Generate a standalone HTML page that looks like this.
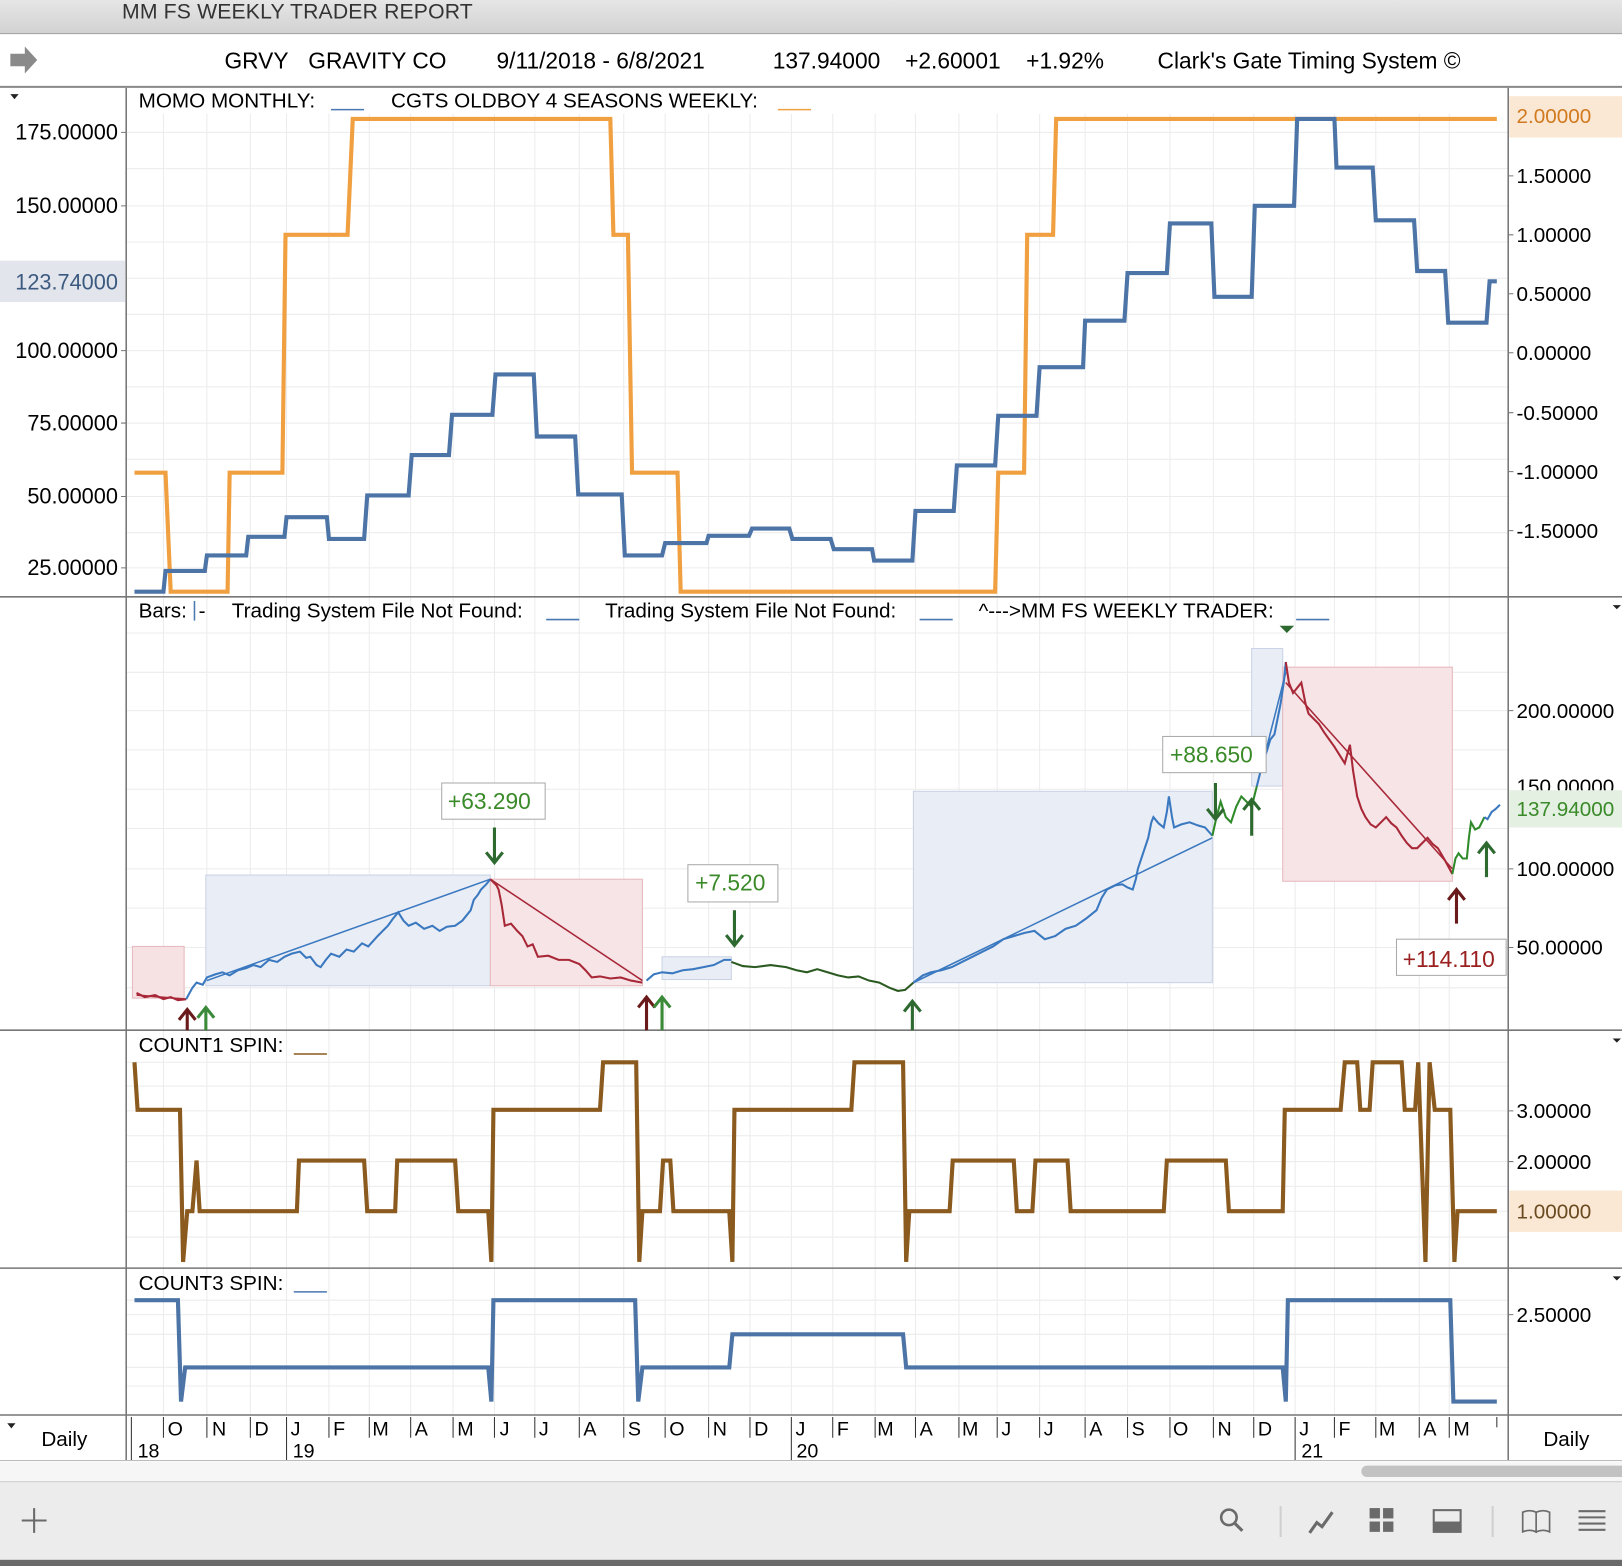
<!DOCTYPE html>
<html><head><meta charset="utf-8"><style>
html,body{margin:0;padding:0;background:#fff;}
svg{display:block;font-family:"Liberation Sans",Arial,sans-serif;}
</style></head><body>
<svg width="1622" height="1566" viewBox="0 0 1568 1514" preserveAspectRatio="none" xmlns="http://www.w3.org/2000/svg">
<defs>
<linearGradient id="tb" x1="0" y1="0" x2="0" y2="1"><stop offset="0" stop-color="#e6e6e6"/><stop offset="1" stop-color="#d2d2d2"/></linearGradient>
</defs>
<rect width="1568" height="1514" fill="#fff"/>
<rect x="0" y="0" width="1568" height="32" fill="url(#tb)"/>
<line x1="0" y1="32.5" x2="1568" y2="32.5" stroke="#9a9a9a"/>
<text x="118" y="18" font-size="20.5" fill="#333" textLength="339">MM FS WEEKLY TRADER REPORT</text>
<path d="M10 52 h14 v-7 l12 13 -12 13 v-7 h-14z" fill="#8a8a8a"/>
<g font-size="22" fill="#000">
<text x="217" y="66">GRVY</text><text x="298" y="66">GRAVITY CO</text>
<text x="480" y="66">9/11/2018 - 6/8/2021</text>
<text x="747" y="66">137.94000</text><text x="875" y="66">+2.60001</text><text x="992" y="66">+1.92%</text>
<text x="1119" y="66">Clark's Gate Timing System ©</text>
</g>
<line x1="0" y1="84" x2="1568" y2="84" stroke="#888" stroke-width="2"/>

<g stroke="#ececec" stroke-width="1">
<path d="M122 128H1458M122 163H1458M122 199H1458M122 234H1458M122 269H1458M122 304H1458M122 339H1458M122 374H1458M122 409H1458M122 444H1458M122 480H1458M122 515H1458M122 549H1458"/>
<path d="M122 612H1458M122 650H1458M122 687H1458M122 725H1458M122 763H1458M122 801H1458M122 840H1458M122 878H1458M122 916H1458M122 955H1458"/>
<path d="M122 1027H1458M122 1050H1458M122 1074H1458M122 1098H1458M122 1123H1458M122 1147H1458M122 1171H1458M122 1196H1458"/>
<path d="M122 1257H1458M122 1271H1458M122 1290H1458M122 1322H1458M122 1340H1458"/>
<path d="M158 110V1368M200 110V1368M242 110V1368M277 110V1368M318 110V1368M357 110V1368M397 110V1368M438 110V1368M478 110V1368M517 110V1368M560 110V1368M603 110V1368M643 110V1368M685 110V1368M725 110V1368M765 110V1368M805 110V1368M846 110V1368M885 110V1368M927 110V1368M964 110V1368M1005 110V1368M1049 110V1368M1090 110V1368M1131 110V1368M1173 110V1368M1212 110V1368M1252 110V1368M1290 110V1368M1330 110V1368M1372 110V1368M1401 110V1368"/>
</g>

<g stroke="#777" stroke-width="1.5" fill="none">
<line x1="122" y1="85" x2="122" y2="1412"/>
<line x1="1458" y1="85" x2="1458" y2="1412"/>
<line x1="0" y1="577" x2="1568" y2="577"/>
<line x1="0" y1="996" x2="1568" y2="996"/>
<line x1="0" y1="1226" x2="1568" y2="1226"/>
<line x1="0" y1="1368" x2="1568" y2="1368"/>
</g>
<g fill="#222"><path d="M10 91l4 5 4-5z"/><path d="M1559 585l4 4 4-4z"/><path d="M1559 1004l4 4 4-4z"/><path d="M1559 1234l4 4 4-4z"/><path d="M7 1376l4 5 4-5z"/></g>

<text x="134" y="104" font-size="20" fill="#000">MOMO MONTHLY:</text>
<line x1="320" y1="106" x2="352" y2="106" stroke="#4a78b0" stroke-width="1.5"/>
<text x="378" y="104" font-size="20" fill="#000">CGTS OLDBOY 4 SEASONS WEEKLY:</text>
<line x1="752" y1="106" x2="784" y2="106" stroke="#f0a040" stroke-width="1.5"/>
<g font-size="21" fill="#000" text-anchor="end">
<text x="114" y="135">175.00000</text><text x="114" y="206">150.00000</text>
<text x="114" y="346">100.00000</text><text x="114" y="416">75.00000</text>
<text x="114" y="487">50.00000</text><text x="114" y="556">25.00000</text>
</g>
<rect x="0" y="252" width="121" height="40" fill="#e2e6ec"/>
<text x="114" y="280" font-size="21" fill="#3c5a80" text-anchor="end">123.74000</text>
<g stroke="#777"><path d="M117 128h5M117 199h5M117 339h5M117 409h5M117 480h5M117 549h5"/><path d="M1458 170h5M1458 227h5M1458 284h5M1458 341h5M1458 399h5M1458 456h5M1458 513h5M1458 687h5M1458 840h5M1458 916h5M1458 1074h5M1458 1123h5M1458 1271h5"/></g>
<rect x="1459" y="93" width="109" height="40" fill="#fbe8d4"/>
<g font-size="20" fill="#000">
<text x="1466" y="119" fill="#d27a20">2.00000</text>
<text x="1466" y="177">1.50000</text><text x="1466" y="234">1.00000</text>
<text x="1466" y="291">0.50000</text><text x="1466" y="348">0.00000</text>
<text x="1466" y="406">-0.50000</text><text x="1466" y="463">-1.00000</text><text x="1466" y="520">-1.50000</text>
</g>
<polyline fill="none" stroke="#f0a040" stroke-width="4" points="130,457 160,457 165,572 220,572 222,457 273,457 276,227 336,227 341,115 590,115 593,227 607,227 611,457 655,457 658,572 962,572 965,457 990,457 993,227 1018,227 1021,115 1447,115"/>
<polyline fill="none" stroke="#4d74a6" stroke-width="4" points="130,572 158,572 160,552 198,552 200,537 238,537 240,519 275,519 277,500 316,500 318,521 352,521 355,479 395,479 398,440 434,440 437,401 476,401 479,362 516,362 519,422 556,422 559,478 601,478 604,537 640,537 643,525 683,525 685,518 724,518 727,511 763,511 766,521 803,521 806,531 843,531 845,542 882,542 885,494 922,494 925,450 962,450 965,402 1002,402 1005,355 1047,355 1049,310 1087,310 1090,264 1128,264 1131,216 1171,216 1174,287 1210,287 1213,199 1251,199 1254,115 1290,115 1292,162 1327,162 1330,213 1367,213 1370,262 1397,262 1400,312 1437,312 1440,272 1447,272"/>

<text x="134" y="597" font-size="20" fill="#000">Bars:</text><line x1="188" y1="581" x2="188" y2="600" stroke="#4a78b0" stroke-width="1.5"/><text x="192" y="597" font-size="20">-</text>
<text x="224" y="597" font-size="20">Trading System File Not Found:</text>
<line x1="528" y1="599" x2="560" y2="599" stroke="#4a78b0" stroke-width="1.5"/>
<text x="585" y="597" font-size="20">Trading System File Not Found:</text>
<line x1="889" y1="599" x2="921" y2="599" stroke="#4a78b0" stroke-width="1.5"/>
<text x="946" y="597" font-size="20">^---&gt;MM FS WEEKLY TRADER:</text>
<line x1="1253" y1="599" x2="1285" y2="599" stroke="#4a78b0" stroke-width="1.5"/>
<g stroke-width="1">
<rect x="128" y="915" width="50" height="50" fill="#f6e1e3" stroke="#e6b8bd"/>
<rect x="199" y="846" width="275" height="107" fill="#e9edf5" stroke="#c9d3e6"/>
<rect x="474" y="850" width="147" height="103" fill="#f6e4e6" stroke="#e6b8bd"/>
<rect x="640" y="925" width="67" height="22" fill="#e9edf5" stroke="#c9d3e6"/>
<rect x="883" y="765" width="289" height="185" fill="#e9edf5" stroke="#c9d3e6"/>
<rect x="1210" y="627" width="30" height="133" fill="#e9edf5" stroke="#c9d3e6"/>
<rect x="1240" y="645" width="164" height="207" fill="#f6e4e6" stroke="#e6b8bd"/>
</g>
<g fill="none" stroke-width="2">
<polyline stroke="#a82838" points="132,960 140,964 150,962 158,966 165,964 172,967 180,966"/>
<line x1="132" y1="962" x2="180" y2="966" stroke="#a82838" stroke-width="1.5"/>
<polyline stroke="#3a78c0" points="180,966 186,955 190,950 196,952 200,945 208,942 215,940 222,943 230,938 238,936 245,933 252,935 260,928 268,930 275,925 282,922 290,920 296,926 300,925 306,933 310,935 315,928 320,922 328,925 335,918 342,920 350,912 356,915 365,905 370,900 375,895 380,888 385,882 390,890 395,895 402,892 410,898 418,895 425,900 432,896 440,895 447,890 455,880 458,870 462,865 465,860 470,855 474,850"/>
<line x1="200" y1="948" x2="474" y2="850" stroke="#3a78c0" stroke-width="1.5"/>
<polyline stroke="#a82838" points="474,850 480,856 482,860 485,875 488,895 494,893 500,900 505,905 510,915 515,913 520,925 530,924 540,928 550,928 560,932 566,938 572,945 580,944 590,946 600,945 610,948 621,950"/>
<line x1="474" y1="850" x2="621" y2="948" stroke="#a82838" stroke-width="1.5"/>
<polyline stroke="#3a78c0" points="625,948 632,942 640,940 650,941 660,938 670,937 680,935 690,933 700,928 707,928"/>
<polyline stroke="#2a5a20" points="707,930 718,934 730,935 745,933 760,935 770,938 780,940 790,937 800,940 810,943 820,945 830,944 840,948 850,950 860,955 868,958 875,957 883,950"/>
<polyline stroke="#3a78c0" points="883,950 892,943 900,940 910,938 920,935 930,930 940,925 950,920 960,915 970,908 980,905 990,902 1000,900 1010,908 1020,905 1030,898 1040,895 1050,888 1060,880 1065,868 1070,860 1078,856 1085,855 1090,858 1095,860 1098,850 1100,840 1105,825 1110,810 1113,795 1115,790 1120,796 1125,800 1128,785 1130,770 1133,790 1135,800 1142,797 1150,795 1158,798 1165,800 1172,808"/>
<line x1="883" y1="950" x2="1172" y2="810" stroke="#3a78c0" stroke-width="1.5"/>
<polyline stroke="#2f8a2a" points="1172,808 1176,790 1180,775 1185,790 1190,795 1195,780 1200,770 1205,775 1210,780 1215,760"/>
<polyline stroke="#3a78c0" points="1215,760 1220,740 1225,725 1228,715 1232,710 1235,695 1238,680 1241,660 1243,640"/>
<line x1="1215" y1="760" x2="1243" y2="650" stroke="#3a78c0" stroke-width="1.5"/>
<polyline stroke="#a82838" points="1243,640 1246,660 1250,670 1254,665 1258,660 1262,680 1265,690 1270,695 1275,700 1280,708 1285,715 1290,722 1295,730 1300,738 1305,720 1308,745 1312,770 1316,782 1320,790 1325,797 1330,800 1335,795 1340,790 1345,796 1350,800 1355,808 1360,815 1365,820 1370,820 1375,815 1380,810 1385,816 1390,820 1397,832 1404,845"/>
<line x1="1243" y1="660" x2="1404" y2="840" stroke="#a82838" stroke-width="1.5"/>
<polyline stroke="#2f8a2a" points="1404,845 1407,830 1410,825 1414,830 1418,830 1420,810 1422,795 1426,802 1430,800 1435,790"/>
<polyline stroke="#3a78c0" points="1435,790 1438,792 1442,785 1446,782 1450,778"/>
</g>
<g font-size="22">
<rect x="427" y="757" width="100" height="35" fill="#fff" stroke="#aaa"/><text x="433" y="782" fill="#3a8a2a">+63.290</text>
<rect x="665" y="836" width="87" height="36" fill="#fff" stroke="#aaa"/><text x="672" y="861" fill="#3a8a2a">+7.520</text>
<rect x="1124" y="712" width="100" height="35" fill="#fff" stroke="#aaa"/><text x="1131" y="737" fill="#3a8a2a">+88.650</text>
<rect x="1350" y="908" width="106" height="35" fill="#fff" stroke="#aaa"/><text x="1356" y="935" fill="#9a2020">+114.110</text>
</g>
<g stroke-width="3" fill="none">
<path d="M478 800V832M470 824l8 10 8-10" stroke="#2e6a30"/>
<path d="M710 880V912M702 904l8 10 8-10" stroke="#2e6a30"/>
<path d="M1175 757V790M1167 782l8 10 8-10" stroke="#2e6a30"/>
<path d="M181 996V978M173 986l8-10 8 10" stroke="#6a1a1a"/>
<path d="M199 996V976M191 984l8-10 8 10" stroke="#3a8a3a"/>
<path d="M625 996V966M617 974l8-10 8 10" stroke="#6a1a1a"/>
<path d="M640 996V966M632 974l8-10 8 10" stroke="#3a8a3a"/>
<path d="M882 996V970M874 978l8-10 8 10" stroke="#2e6a30"/>
<path d="M1210 808V775M1202 783l8-10 8 10" stroke="#2e6a30"/>
<path d="M1408 893V862M1400 870l8-10 8 10" stroke="#6a1a1a"/>
<path d="M1437 848V817M1429 825l8-10 8 10" stroke="#2e6a30"/>
</g>
<path d="M1237 605l7 7 7-7z" fill="#2e6a30"/>
<g font-size="20" fill="#000">
<text x="1466" y="694">200.00000</text>
<text x="1466" y="767">150.00000</text>
<text x="1466" y="847">100.00000</text>
<text x="1466" y="923">50.00000</text>
</g>
<rect x="1459" y="764" width="109" height="36" fill="#e4f0e2"/>
<text x="1466" y="789" font-size="20" fill="#3a8a2a">137.94000</text>

<text x="134" y="1017" font-size="20">COUNT1 SPIN:</text>
<line x1="284" y1="1019" x2="316" y2="1019" stroke="#8b5a1e" stroke-width="1.5"/>
<polyline fill="none" stroke="#8b5a1e" stroke-width="4" points="130,1027 133,1073 174,1073 177,1220 181,1171 186,1171 190,1122 193,1171 287,1171 289,1122 352,1122 355,1171 382,1171 384,1122 440,1122 443,1171 472,1171 475,1220 477,1073 580,1073 583,1027 615,1027 618,1220 621,1171 638,1171 641,1122 648,1122 651,1171 705,1171 708,1220 710,1073 823,1073 826,1027 873,1027 876,1220 879,1171 918,1171 921,1122 980,1122 983,1171 998,1171 1001,1122 1032,1122 1035,1171 1125,1171 1128,1122 1185,1122 1188,1171 1240,1171 1242,1073 1296,1073 1300,1027 1312,1027 1315,1073 1324,1073 1327,1027 1355,1027 1358,1073 1368,1073 1371,1027 1378,1220 1382,1027 1387,1073 1402,1073 1406,1220 1409,1171 1447,1171"/>
<rect x="1459" y="1151" width="109" height="40" fill="#fbe8d4"/>
<g font-size="20" fill="#000">
<text x="1466" y="1081">3.00000</text><text x="1466" y="1130">2.00000</text><text x="1466" y="1178" fill="#6a4a20">1.00000</text>
</g>

<text x="134" y="1247" font-size="20">COUNT3 SPIN:</text>
<line x1="284" y1="1249" x2="316" y2="1249" stroke="#4a78b0" stroke-width="1.5"/>
<polyline fill="none" stroke="#4d74a6" stroke-width="4" points="130,1257 172,1257 175,1355 179,1322 472,1322 475,1355 477,1257 614,1257 617,1355 621,1322 705,1322 708,1290 873,1290 876,1322 1240,1322 1243,1355 1245,1257 1402,1257 1405,1355 1447,1355"/>
<text x="1466" y="1278" font-size="20">2.50000</text>

<text x="40" y="1398" font-size="20">Daily</text>
<text x="1492" y="1398" font-size="20">Daily</text>
<g stroke="#333" stroke-width="1">
<path d="M158 1370V1390M200 1370V1390M242 1370V1390M277 1370V1412M318 1370V1390M357 1370V1390M397 1370V1390M438 1370V1390M478 1370V1390M517 1370V1390M560 1370V1390M603 1370V1390M643 1370V1390M685 1370V1390M725 1370V1390M765 1370V1412M805 1370V1390M846 1370V1390M885 1370V1390M927 1370V1390M964 1370V1390M1005 1370V1390M1049 1370V1390M1090 1370V1390M1131 1370V1390M1173 1370V1390M1212 1370V1390M1252 1370V1412M1290 1370V1390M1330 1370V1390M1372 1370V1390M1401 1370V1390M1447 1370V1380M127 1370V1412"/>
</g>
<g font-size="19" fill="#000">
<text x="162" y="1388">O</text><text x="205" y="1388">N</text><text x="246" y="1388">D</text><text x="281" y="1388">J</text><text x="322" y="1388">F</text><text x="360" y="1388">M</text><text x="401" y="1388">A</text><text x="442" y="1388">M</text><text x="483" y="1388">J</text><text x="521" y="1388">J</text><text x="564" y="1388">A</text><text x="607" y="1388">S</text><text x="647" y="1388">O</text><text x="689" y="1388">N</text><text x="729" y="1388">D</text><text x="769" y="1388">J</text><text x="809" y="1388">F</text><text x="848" y="1388">M</text><text x="889" y="1388">A</text><text x="930" y="1388">M</text><text x="968" y="1388">J</text><text x="1009" y="1388">J</text><text x="1053" y="1388">A</text><text x="1094" y="1388">S</text><text x="1134" y="1388">O</text><text x="1177" y="1388">N</text><text x="1216" y="1388">D</text><text x="1256" y="1388">J</text><text x="1294" y="1388">F</text><text x="1333" y="1388">M</text><text x="1376" y="1388">A</text><text x="1405" y="1388">M</text>
<text x="133" y="1409">18</text><text x="283" y="1409">19</text><text x="770" y="1409">20</text><text x="1258" y="1409">21</text>
</g>
<line x1="0" y1="1412" x2="1568" y2="1412" stroke="#bbb"/>
<rect x="0" y="1413" width="1568" height="19" fill="#f6f6f6"/>
<rect x="1316" y="1417" width="260" height="11" rx="5.5" fill="#c2c2c2"/>
<rect x="0" y="1432" width="1568" height="76" fill="#ececec"/>
<line x1="0" y1="1432.5" x2="1568" y2="1432.5" stroke="#cfcfcf"/>
<rect x="0" y="1508" width="1568" height="6" fill="#6a6a6a"/>
<g stroke="#6a6a6a" stroke-width="2" fill="none">
<path d="M33 1458V1482M21 1470H45"/>
<circle cx="1188" cy="1467" r="7.5" stroke-width="2.5"/><path d="M1194 1473l7 7" stroke-width="3"/>
<path d="M1266 1482l7-10 5 4 10-14" stroke-width="3"/>
<path d="M1238 1456V1486M1443 1456V1486" stroke="#d0d0d0"/>
<rect x="1386" y="1460" width="26" height="21"/>
<path d="M1472 1462q7-3 13 0v19q-6-3-13 0zM1485 1462q7-3 13 0v19q-6-3-13 0z" stroke-width="1.6"/>
<path d="M1526 1461h26M1526 1467h26M1526 1473h26M1526 1479h26" stroke-width="2"/>
</g>
<g fill="#6a6a6a">
<rect x="1324" y="1458" width="10" height="10"/><rect x="1337" y="1458" width="10" height="10"/><rect x="1324" y="1471" width="10" height="10"/><rect x="1337" y="1471" width="10" height="10"/>
<rect x="1386" y="1471" width="26" height="10"/>
</g>
</svg>
</body></html>
